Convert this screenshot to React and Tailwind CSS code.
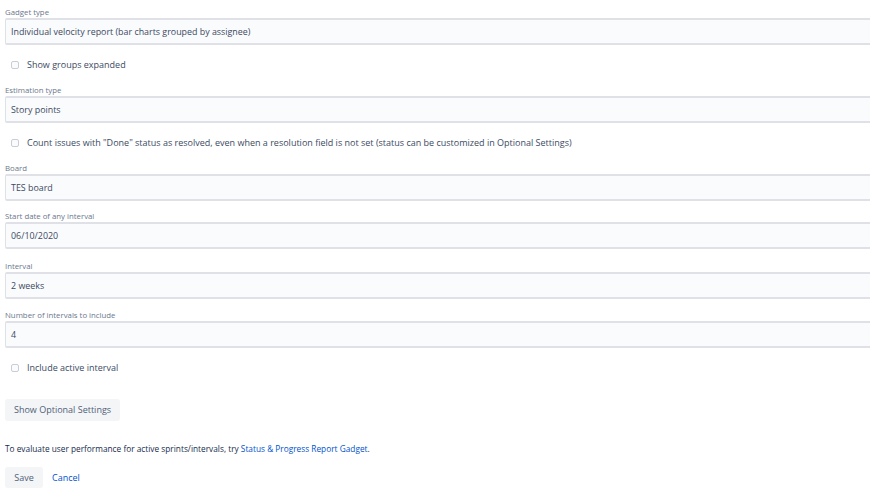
import { useState } from 'react';

const FONT = { fontFamily: '"Open Sans", "Noto Sans", sans-serif' };

function Field({ label, value, className = '' }) {
  return (
    <div className={className}>
      <label className="block text-[7.8px] leading-[10px] text-[#6b778c] mb-[1px]">{label}</label>
      <div className="h-[27px] w-[900px] border border-[#dfe1e6] border-t-[2px] border-b-[2px] bg-[#fafbfc] rounded-[2px] flex items-center px-[5px] text-[8.9px] text-[#3b4a63]">
        {value}
      </div>
    </div>
  );
}

function Check({ label, className = '' }) {
  const [checked, setChecked] = useState(false);
  return (
    <label className={`flex items-center gap-[8px] pl-[6px] h-[10px] text-[9px] text-[#3b4a63] ${className}`}>
      <input
        type="checkbox"
        checked={checked}
        onChange={(e) => setChecked(e.target.checked)}
        className="appearance-none h-[8px] w-[8px] border border-[#c9ced6] rounded-[2px] bg-[#fafbfc]"
      />
      {label}
    </label>
  );
}

export default function App() {
  return (
    <div className="w-[870px] h-[494px] overflow-hidden bg-white" style={FONT}>
      <form className="pl-[5px] pt-[7px]">
        <Field label="Gadget type" value="Individual velocity report (bar charts grouped by assignee)" />
        <Check label="Show groups expanded" className="mt-[15px]" />
        <Field label="Estimation type" value="Story points" className="mt-[15px]" />
        <Check
          label={'Count issues with "Done" status as resolved, even when a resolution field is not set (status can be customized in Optional Settings)'}
          className="mt-[15px]"
        />
        <Field label="Board" value="TES board" className="mt-[15px]" />
        <Field label="Start date of any interval" value="06/10/2020" className="mt-[10px]" />
        <Field label="Interval" value="2 weeks" className="mt-[12px]" />
        <Field label="Number of intervals to include" value="4" className="mt-[11px]" />
        <Check label="Include active interval" className="mt-[15px]" />
        <button
          type="button"
          className="block mt-[26px] h-[22px] px-[9px] bg-[#f4f5f7] rounded-[3px] text-[9px] text-[#505f79]"
        >
          Show Optional Settings
        </button>
        <p className="mt-[22px] text-[8.3px] leading-[12px] text-[#172b4d]">
          To evaluate user performance for active sprints/intervals, try{' '}
          <a className="text-[#0052cc]">Status &amp; Progress Report Gadget</a>.
        </p>
        <div className="mt-[12px] flex items-center gap-[9px]">
          <button type="button" className="h-[21px] w-[38px] bg-[#f4f5f7] rounded-[3px] text-[9px] text-[#505f79]">
            Save
          </button>
          <a className="text-[9px] text-[#0052cc]">Cancel</a>
        </div>
      </form>
    </div>
  );
}
